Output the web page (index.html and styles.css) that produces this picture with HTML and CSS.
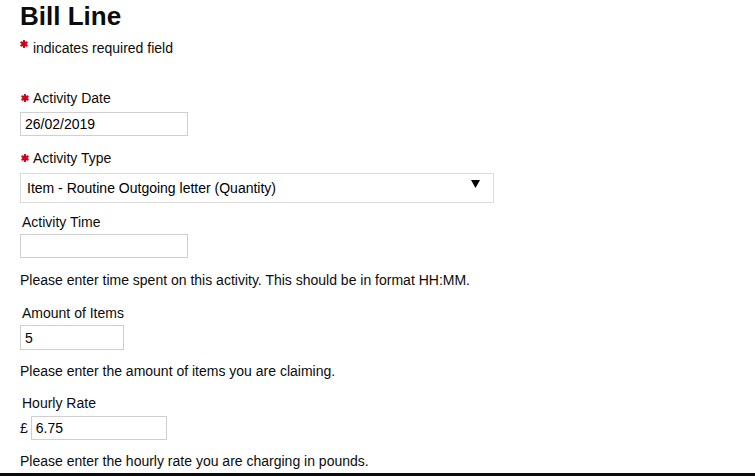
FILE: index.html
```html
<!DOCTYPE html>
<html lang="en">
<head>
<meta charset="utf-8">
<title>Bill Line</title>
<link rel="stylesheet" href="styles.css">
</head>
<body>
<main class="page">
  <h1 class="title">Bill Line</h1>
  <p class="note"><svg class="req req-note" viewBox="0 0 8 8" aria-hidden="true"><g stroke="#d0021b" stroke-width="2.3" stroke-linecap="round"><line x1="4" y1="1" x2="4" y2="7"/><line x1="1.4" y1="2.5" x2="6.6" y2="5.5"/><line x1="1.4" y1="5.5" x2="6.6" y2="2.5"/></g></svg> indicates required field</p>

  <form class="form">
    <div class="field field-date">
      <label class="label label-req" for="date"><svg class="req" viewBox="0 0 8 8" aria-hidden="true"><g stroke="#d0021b" stroke-width="2.3" stroke-linecap="round"><line x1="4" y1="1" x2="4" y2="7"/><line x1="1.4" y1="2.5" x2="6.6" y2="5.5"/><line x1="1.4" y1="5.5" x2="6.6" y2="2.5"/></g></svg>Activity Date</label>
      <input class="input w-date" id="date" type="text" value="26/02/2019">
    </div>

    <div class="field field-type">
      <label class="label label-req" for="type"><svg class="req" viewBox="0 0 8 8" aria-hidden="true"><g stroke="#d0021b" stroke-width="2.3" stroke-linecap="round"><line x1="4" y1="1" x2="4" y2="7"/><line x1="1.4" y1="2.5" x2="6.6" y2="5.5"/><line x1="1.4" y1="5.5" x2="6.6" y2="2.5"/></g></svg>Activity Type</label>
      <div class="select-wrap">
        <select class="select" id="type">
          <option>Item - Routine Outgoing letter (Quantity)</option>
        </select>
        <svg class="select-arrow" viewBox="0 0 9 8" aria-hidden="true"><polygon points="0,0 9,0 4.5,8" fill="#000"/></svg>
      </div>
    </div>

    <div class="field field-time">
      <label class="label" for="time">Activity Time</label>
      <input class="input w-date" id="time" type="text" value="">
    </div>
    <p class="help">Please enter time spent on this activity. This should be in format HH:MM.</p>

    <div class="field field-amount">
      <label class="label" for="amount">Amount of Items</label>
      <input class="input w-amount" id="amount" type="text" value="5">
    </div>
    <p class="help">Please enter the amount of items you are claiming.</p>

    <div class="field field-rate">
      <label class="label" for="rate">Hourly Rate</label>
      <div class="prefix-row">
        <span class="prefix">£</span>
        <input class="input w-rate" id="rate" type="text" value="6.75">
      </div>
    </div>
    <p class="help">Please enter the hourly rate you are charging in pounds.</p>
  </form>
</main>
<div class="bottom-bar"></div>
</body>
</html>
```

FILE: styles.css
```css
html, body {
  margin: 0;
  padding: 0;
  background: #fff;
}

body {
  font-family: "Liberation Sans", Arial, sans-serif;
  font-size: 14px;
  line-height: 16px;
  color: #0b0c0c;
  overflow: hidden;
}

.page {
  padding: 0 20px;
}

.title {
  margin: 1px 0 0;
  font-size: 26px;
  line-height: 30px;
  font-weight: 700;
  color: #0b0c0c;
}

.note {
  margin: 9px 0 0;
}

.req {
  display: inline-block;
  width: 8px;
  height: 8px;
  vertical-align: 1px;
  margin-right: 4px;
}

.req-note {
  margin-left: 0;
  margin-right: 1px;
  vertical-align: 5px;
}

.form {
  margin: 0;
}

.field {
  display: flex;
  flex-direction: column;
  align-items: flex-start;
}

.label {
  display: block;
  padding-left: 2px;
  margin-bottom: 4px;
}

.label-req {
  padding-left: 1px;
  margin-bottom: 6px;
}

.field-date { margin-top: 34px; }
.field-type { margin-top: 14px; }
.field-type .label { margin-bottom: 7px; }
.field-time { margin-top: 11px; }
.field-amount { margin-top: 17px; }
.field-rate { margin-top: 16px; }
.field-rate .label { margin-bottom: 5px; }

.input {
  box-sizing: border-box;
  height: 24px;
  margin: 0;
  padding: 0 4px;
  border: 1px solid #cfcfcf;
  border-radius: 0;
  background: #fff;
  font-family: "Liberation Sans", Arial, sans-serif;
  font-size: 14px;
  color: #000;
  outline: none;
}

.w-date { width: 168px; }
.w-amount { width: 104px; height: 25px; }
.w-rate { width: 136px; }

.select-wrap {
  position: relative;
  width: 474px;
}

.select {
  box-sizing: border-box;
  display: block;
  width: 100%;
  height: 30px;
  margin: 0;
  padding: 0 30px 0 6px;
  border: 1px solid #dcdcdc;
  border-radius: 0;
  background: #fff;
  font-family: "Liberation Sans", Arial, sans-serif;
  font-size: 14px;
  color: #000;
  -webkit-appearance: none;
  appearance: none;
  outline: none;
}

.select-arrow {
  position: absolute;
  right: 14px;
  top: 7px;
  width: 9px;
  height: 8px;
  pointer-events: none;
}

.help {
  margin: 14px 0 0;
}

.field-amount + .help,
.field-rate + .help {
  margin-top: 13px;
}

.prefix-row {
  display: flex;
  align-items: center;
  gap: 3px;
}

.prefix {
  display: block;
}

.bottom-bar {
  margin-top: 4px;
  height: 10px;
  background: #0b0c0c;
}
```
